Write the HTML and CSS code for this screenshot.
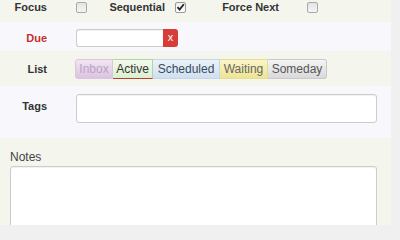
FILE: index.html
```html
<!DOCTYPE html>
<html>
<head>
<meta charset="utf-8">
<link rel="stylesheet" href="styles.css">
</head>
<body>
<div class="panel">
  <div class="row row-flags beige">
    <div class="pair">
      <span class="lbl w1">Focus</span>
      <span class="cb m1"></span>
    </div>
    <div class="pair">
      <span class="lbl w2">Sequential</span>
      <span class="cb m2 checked"><svg viewBox="0 0 11 11" width="11" height="11"><path d="M2.5 5.2 L4.6 7.6 L8.8 2.2" fill="none" stroke="#222" stroke-width="1.8"/></svg></span>
    </div>
    <div class="pair">
      <span class="lbl w3">Force Next</span>
      <span class="cb m3"></span>
    </div>
  </div>
  <div class="row row-due blue">
    <span class="lbl w1 red">Due</span>
    <div class="field due-field">
      <span class="due-input"></span>
      <span class="due-clear">x</span>
    </div>
  </div>
  <div class="row row-list beige">
    <span class="lbl w1">List</span>
    <div class="field btn-group">
      <span class="tab inbox">Inbox</span>
      <span class="tab active">Active</span>
      <span class="tab scheduled">Scheduled</span>
      <span class="tab waiting">Waiting</span>
      <span class="tab someday">Someday</span>
    </div>
  </div>
  <div class="row row-tags blue">
    <span class="lbl w1 tags-lbl">Tags</span>
    <div class="field">
      <span class="tags-input"></span>
    </div>
  </div>
  <div class="notes beige">
    <div class="notes-lbl">Notes</div>
    <div class="notes-area"></div>
  </div>
</div>
</body>
</html>
```

FILE: styles.css
```css
html, body {
  margin: 0;
  padding: 0;
  background: #f0f0f0;
  font-family: "Liberation Sans", Arial, sans-serif;
  overflow: hidden;
  height: 225px;
}
.panel {
  width: 391px;
  margin-top: -8px;
  height: 233px;
  background: #f4f5ed;
  overflow: hidden;
}
.beige { background: #f4f5ed; }
.blue { background: #f8f8fc; }
.row {
  display: flex;
  align-items: center;
}
.row-flags { height: 30px; }
.row-due { height: 29px; padding-top: 2px; box-sizing: border-box; }
.row-list { height: 35px; padding-top: 1px; box-sizing: border-box; }
.row-tags { height: 52px; align-items: flex-start; padding-top: 8px; box-sizing: border-box; }
.pair {
  display: flex;
  align-items: center;
}
.lbl {
  font-size: 11px;
  font-weight: bold;
  color: #333;
  text-align: right;
  flex: none;
}
.red { color: #c4312c; }
.w1 { width: 47px; }
.w2 { width: 78px; }
.w3 { width: 93px; }
.tags-lbl { margin-top: 6px; }
.field { margin-left: 29px; display: flex; }
.cb {
  width: 11px;
  height: 11px;
  box-sizing: border-box;
  border: 1px solid #a9a9a9;
  border-radius: 2px;
  background: linear-gradient(#e4e4e4, #f4f4f4);
  display: flex;
  flex: none;
}
.cb svg { display: block; margin: -1px; }
.checked { background: linear-gradient(#eeeeee, #ffffff); border-color: #999; }
.m1 { margin-left: 29px; }
.m2 { margin-left: 10px; }
.m3 { margin-left: 28px; }
.due-field { align-items: stretch; height: 18px; }
.due-input {
  width: 87px;
  box-sizing: border-box;
  background: #fff;
  border: 1px solid #ccc;
  border-right: none;
  border-radius: 3px 0 0 3px;
  box-shadow: inset 0 1px 1px rgba(0,0,0,0.06);
}
.due-clear {
  width: 15px;
  background: #d63d37;
  color: #fff;
  font-size: 11px;
  display: flex;
  align-items: center;
  justify-content: center;
  border-radius: 0 3px 3px 0;
  padding-bottom: 1px;
  box-sizing: border-box;
}
.btn-group { margin-left: 28px; }
.tab {
  font-size: 12px;
  height: 20px;
  line-height: 19px;
  text-align: center;
  box-sizing: border-box;
  border: 1px solid #ccc;
  border-left: none;
  white-space: nowrap;
}
.inbox {
  width: 38px;
  border-left: 1px solid #d7c6dc;
  border-color: #d7c6dc;
  border-radius: 3px 0 0 3px;
  background: linear-gradient(#f1e6f3, #dcc3e3);
  color: #b9a3bf;
}
.active {
  width: 40px;
  border-color: #b6d3a6;
  border-bottom: 1px solid #b3413a;
  background: linear-gradient(#f2faeb, #dcefcf);
  color: #333;
}
.scheduled {
  width: 67px;
  border-color: #c3d5e6;
  background: linear-gradient(#eaf2fa, #cfe0f1);
  color: #3b4a5a;
}
.waiting {
  width: 48px;
  border-color: #e5dc9c;
  background: linear-gradient(#faf5c6, #efe493);
  color: #666;
}
.someday {
  width: 59px;
  border-color: #c9c9c9;
  border-radius: 0 3px 3px 0;
  background: linear-gradient(#f4f4f4, #d9d9dc);
  color: #555;
}
.tags-input {
  display: block;
  width: 301px;
  height: 29px;
  box-sizing: border-box;
  background: #fff;
  border: 1px solid #ccc;
  border-radius: 3px;
  box-shadow: inset 0 1px 1px rgba(0,0,0,0.06);
}
.notes {
  padding: 12px 0 0 10px;
  height: 87px;
  box-sizing: border-box;
  overflow: hidden;
}
.notes-lbl {
  font-size: 12px;
  color: #444;
  line-height: 14px;
}
.notes-area {
  margin-top: 2px;
  width: 367px;
  height: 80px;
  box-sizing: border-box;
  background: #fff;
  border: 1px solid #ccc;
  border-radius: 3px;
  box-shadow: inset 0 1px 1px rgba(0,0,0,0.06);
}
```
